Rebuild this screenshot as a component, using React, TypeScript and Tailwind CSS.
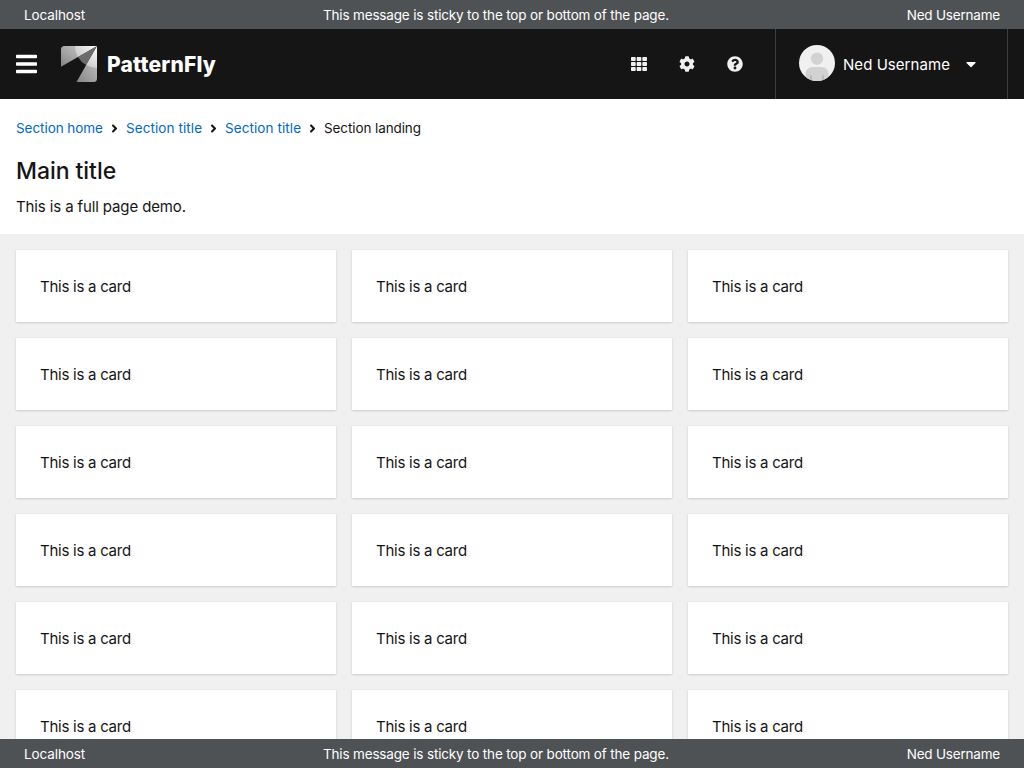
import React from 'react';
import { FaAngleRight, FaBars, FaCaretDown, FaCog, FaQuestionCircle, FaTh } from 'react-icons/fa';

function Banner() {
  return (
    <div className="z-10 flex h-[29px] shrink-0 items-center justify-between whitespace-nowrap bg-[#4f5255] px-6 pt-px text-[13.5px] leading-[21px] text-white">
      <span className="tracking-[-0.1px]">Localhost</span>
      <span className="tracking-[-0.16px]">This message is sticky to the top or bottom of the page.</span>
      <span className="tracking-[-0.2px]">Ned Username</span>
    </div>
  );
}

function Logo() {
  return (
    <svg width="36" height="36" viewBox="0 0 36 36" className="shrink-0">
      <defs>
        <linearGradient id="left" x1="0" y1="20" x2="16" y2="0" gradientUnits="userSpaceOnUse">
          <stop offset="0" stopColor="#858585" />
          <stop offset="1" stopColor="#bebebe" />
        </linearGradient>
        <linearGradient id="right" x1="16" y1="36" x2="36" y2="20" gradientUnits="userSpaceOnUse">
          <stop offset="0" stopColor="#858585" />
          <stop offset="1" stopColor="#b8b8b8" />
        </linearGradient>
        <linearGradient id="glow" x1="18" y1="16" x2="34" y2="2" gradientUnits="userSpaceOnUse">
          <stop offset="0" stopColor="#c6c6c6" />
          <stop offset="1" stopColor="#f6f6f6" />
        </linearGradient>
        <linearGradient id="glowRight" x1="25" y1="22" x2="36" y2="6" gradientUnits="userSpaceOnUse">
          <stop offset="0" stopColor="#c6c6c6" />
          <stop offset="1" stopColor="#f6f6f6" />
        </linearGradient>
      </defs>
      <path d="M3.5 0H36L0 20.7V3.5A3.5 3.5 0 0 1 3.5 0Z" fill="url(#left)" />
      <path d="M36 0V32.5A3.5 3.5 0 0 1 32.5 36H15.5Z" fill="url(#right)" />
      <path d="M14 0H36L16.9 11A22 22 0 0 1 14 0Z" fill="url(#glow)" />
      <path d="M36 0V22A22 22 0 0 1 25.1 19.1Z" fill="url(#glowRight)" />
      <path d="M36 0L16.9 11A22 22 0 0 0 25.1 19.1Z" fill="#6c6c6c" />
    </svg>
  );
}

function Avatar() {
  return (
    <svg width="36" height="36" viewBox="0 0 36 36" className="shrink-0">
      <defs>
        <clipPath id="face">
          <circle cx="18" cy="18" r="18" />
        </clipPath>
      </defs>
      <g clipPath="url(#face)">
        <rect width="36" height="36" fill="#f0f0f0" />
        <circle cx="18" cy="13.7" r="6.2" fill="#d2d2d2" />
        <path d="M6.5 36V29C6.5 25 9.5 22 13.5 22H22.5C26.5 22 29.5 25 29.5 29V36Z" fill="#d2d2d2" />
        <path d="M11 29.5L13 31V36H11ZM25 29.5L23 31V36H25Z" fill="#b8bbbe" />
      </g>
    </svg>
  );
}

function Header() {
  return (
    <header className="flex h-[70px] shrink-0 items-center bg-[#151515] text-white">
      <FaBars className="ml-4 h-6 w-[21px] shrink-0" />
      <div className="ml-6 flex items-center">
        <Logo />
        <span className="ml-2.5 whitespace-nowrap pt-px text-[21px] font-extrabold leading-6 tracking-[0.2px]">PatternFly</span>
      </div>
      <div className="ml-auto flex items-center gap-8 pr-8 text-[#f0f0f0]">
        <FaTh size={16} />
        <FaCog size={16} />
        <FaQuestionCircle size={16} />
      </div>
      <div className="flex h-full w-[233px] items-center border-x border-[#3c3f42] pl-[23px]">
        <div className="pb-0.5">
          <Avatar />
        </div>
        <span className="ml-2 w-[107px] whitespace-nowrap pt-0.5 text-[15px] leading-6 tracking-[0.05px]">Ned Username</span>
        <FaCaretDown size={16} className="ml-[13px]" />
      </div>
      <div className="w-4" />
    </header>
  );
}

function Breadcrumb() {
  return (
    <nav className="flex items-center whitespace-nowrap text-[13.5px] leading-[21px] text-[#06c]">
      <span className="w-[87px] tracking-[-0.06px]">Section home</span>
      <FaAngleRight size={13} className="mx-[5px] text-[#151515]" />
      <span className="w-[76px] tracking-[0.08px]">Section title</span>
      <FaAngleRight size={13} className="mx-[5px] text-[#151515]" />
      <span className="w-[76px] tracking-[0.08px]">Section title</span>
      <FaAngleRight size={13} className="mx-[5px] text-[#151515]" />
      <span className="tracking-[-0.1px] text-[#151515]">Section landing</span>
    </nav>
  );
}

export default function App() {
  return (
    <div className="flex h-screen flex-col overflow-hidden bg-[#f0f0f0] font-['Inter',sans-serif] text-[#151515]">
      <Banner />
      <Header />
      <section className="h-[135px] shrink-0 bg-white px-4 pt-[19px]">
        <Breadcrumb />
        <h1 className="mt-[17px] whitespace-nowrap text-[23px] font-medium leading-[31px] tracking-[-0.05px]">Main title</h1>
        <p className="mt-2 whitespace-nowrap text-[15px] leading-6 tracking-[-0.12px]">This is a full page demo.</p>
      </section>
      <main className="grid min-h-0 flex-1 auto-rows-[72px] grid-cols-3 gap-4 overflow-hidden p-4">
        {Array.from({ length: 18 }, (_, i) => (
          <article key={i} className="bg-white px-6 pt-[25px] text-[15px] leading-6 tracking-[-0.26px] shadow-[0_1px_2px_0_rgba(3,3,3,0.12),0_0_2px_0_rgba(3,3,3,0.06)]">
            This is a card
          </article>
        ))}
      </main>
      <Banner />
    </div>
  );
}
